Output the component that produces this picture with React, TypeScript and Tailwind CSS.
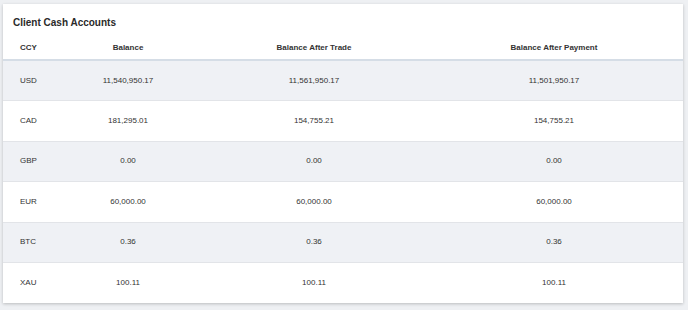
import React from 'react';

interface Row {
  ccy: string;
  balance: string;
  afterTrade: string;
  afterPayment: string;
}

const rows: Row[] = [
  { ccy: 'USD', balance: '11,540,950.17', afterTrade: '11,561,950.17', afterPayment: '11,501,950.17' },
  { ccy: 'CAD', balance: '181,295.01', afterTrade: '154,755.21', afterPayment: '154,755.21' },
  { ccy: 'GBP', balance: '0.00', afterTrade: '0.00', afterPayment: '0.00' },
  { ccy: 'EUR', balance: '60,000.00', afterTrade: '60,000.00', afterPayment: '60,000.00' },
  { ccy: 'BTC', balance: '0.36', afterTrade: '0.36', afterPayment: '0.36' },
  { ccy: 'XAU', balance: '100.11', afterTrade: '100.11', afterPayment: '100.11' },
];

const cols = 'grid grid-cols-[50px_150px_222px_258px]';

const App: React.FC = () => {
  return (
    <div className="w-[688px] h-[310px] bg-[#eef0f3] pt-[4px] pl-[3px] font-['Liberation_Sans',Arial,sans-serif] text-[#333]">
      <div className="w-[680px] bg-white shadow-[0_1px_3px_rgba(0,0,0,0.22)]">
        {/* Title */}
        <div className="pt-[12px] pb-[8px] pl-[10px] h-[34px] text-[10px] leading-[14px] font-bold text-[#2a2a2a]">
          Client Cash Accounts
        </div>

        {/* Header */}
        <div className={`${cols} h-[23px] border-b-2 border-[#d5dde6] text-[8px] font-bold items-center pb-[2px]`}>
          <div className="pl-[17px]">CCY</div>
          <div className="text-center">Balance</div>
          <div className="text-center">Balance After Trade</div>
          <div className="text-center">Balance After Payment</div>
        </div>

        {/* Body */}
        {rows.map((r, i) => (
          <div
            key={r.ccy}
            className={`${cols} items-center text-[8px] ${i === 0 ? 'h-[39px]' : 'h-[40.5px] border-t border-[#e2e4e8]'} ${i % 2 === 0 ? 'bg-[#eff1f5]' : 'bg-white'}`}
          >
            <div className="pl-[17px]">{r.ccy}</div>
            <div className="text-center">{r.balance}</div>
            <div className="text-center">{r.afterTrade}</div>
            <div className="text-center">{r.afterPayment}</div>
          </div>
        ))}
      </div>
    </div>
  );
};

export default App;
